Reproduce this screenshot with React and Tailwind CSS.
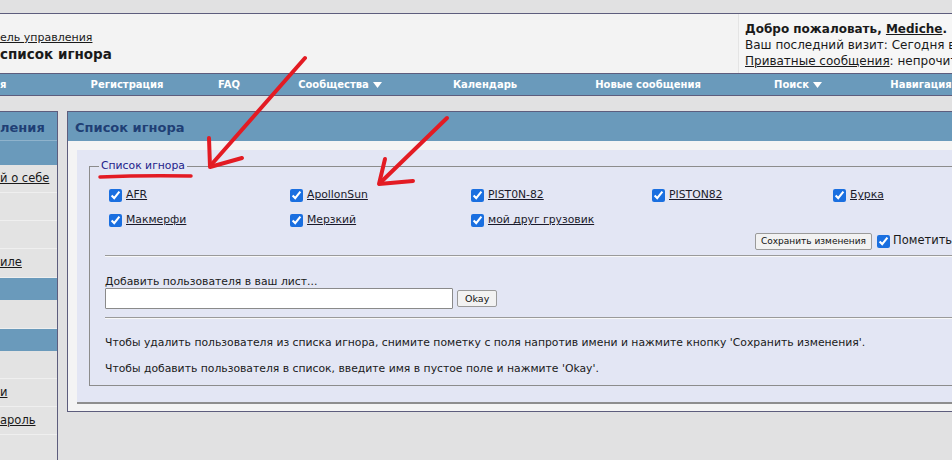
import React from 'react';

const ignored = [
  'AFR', 'ApollonSun', 'PIST0N-82', 'PISTON82', 'Бурка',
  'Макмерфи', 'Мерзкий', 'мой друг грузовик',
];

const navItems = [
  { label: 'я', w: 'w-[70px]', align: 'text-left' },
  { label: 'Регистрация', w: 'w-[114px]' },
  { label: 'FAQ', w: 'w-[90px]' },
  { label: 'Сообщества', w: 'w-[132px]', menu: true },
  { label: 'Календарь', w: 'w-[158px]' },
  { label: 'Новые сообщения', w: 'w-[168px]' },
  { label: 'Поиск', w: 'w-[132px]', menu: true },
  { label: 'Навигация', w: 'w-[114px]' },
];

// sidebar rows: kind + height + visible text fragment
const sideRows = [
  { kind: 'blue', h: 'h-[24px]' },
  { kind: 'row', h: 'h-[28px]', text: 'й о себе' },
  { kind: 'row', h: 'h-[28px]' },
  { kind: 'row', h: 'h-[28px]' },
  { kind: 'row', h: 'h-[29px]', text: 'иле' },
  { kind: 'blue', h: 'h-[22px]' },
  { kind: 'row', h: 'h-[29px]' },
  { kind: 'blue', h: 'h-[22px]' },
  { kind: 'row', h: 'h-[28px]' },
  { kind: 'row', h: 'h-[28px]', text: 'и' },
  { kind: 'row', h: 'h-[28px]', text: 'ароль' },
  { kind: 'row', h: 'h-[28px]' },
];

const Caret = () => (
  <svg width="9" height="6" viewBox="0 0 9 6" className="inline-block ml-[4px] mb-[1px]">
    <path d="M0 0 L9 0 L4.5 6 Z" fill="#ffffff" />
  </svg>
);

const Annotations = () => (
  <svg className="absolute inset-0 pointer-events-none" width="952" height="460" viewBox="0 0 952 460">
    <g stroke="#e31b23" strokeWidth="4" strokeLinecap="round" fill="none">
      <path d="M305 58 L211 165" />
      <path d="M209 138 L210 167 L242 158" strokeLinejoin="round" />
      <path d="M447 118 L380 183" />
      <path d="M385 159 L379 184 L413 181" strokeLinejoin="round" />
      <path d="M100 177 Q145 175 191 176" strokeWidth="3.5" />
    </g>
  </svg>
);

export default function App() {
  return (
    <div className="relative w-[952px] h-[460px] overflow-hidden bg-[#e1e1e2] text-[#1a1a1a] font-['DejaVu_Sans',sans-serif]">
      <div className="h-[13px]" />

      {/* Header */}
      <div className="flex h-[60px] border-t border-[#5d5d7d]">
        <div className="flex-1 bg-[#f3f3f3] pt-[15px] leading-[17px]">
          <div className="text-[11px]"><a className="underline">ель управления</a></div>
          <div className="font-bold text-[13.5px]">список игнора</div>
        </div>
        <div className="w-[214px] bg-[#f6f6f6] border-l border-[#e4e4e4] pl-[6px] pt-[7px] text-[12px] leading-[16px] whitespace-nowrap">
          <div className="font-bold">Добро пожаловать, <a className="underline">Mediche</a>.</div>
          <div>Ваш последний визит: Сегодня в 10:12</div>
          <div><a className="underline">Приватные сообщения</a>: непрочитанных 0</div>
        </div>
      </div>

      {/* Nav bar */}
      <div className="flex h-[23px] items-center bg-[#6a9abb] border-y border-[#5d5d7d] text-white font-bold text-[10px] whitespace-nowrap">
        {navItems.map((n) => (
          <div key={n.label} className={`${n.w} shrink-0 ${n.align || 'text-center'}`}>
            {n.label}
            {n.menu && <Caret />}
          </div>
        ))}
      </div>

      <div className="h-[15px]" />

      {/* Body */}
      <div className="flex items-start">
        {/* Sidebar */}
        <div className="w-[58px] shrink-0 h-[349px] border-t border-r border-[#5d5d7d] bg-[#e3e3e3]">
          <div className="h-[29px] bg-[#6a9abb] flex items-center pt-[3px] text-[13px] font-bold text-[#1f3f75] border-b border-[#8fb3cc]">
            ления
          </div>
          {sideRows.map((r, i) =>
            r.kind === 'blue' ? (
              <div key={i} className={`${r.h} bg-[#6a9abb]`} />
            ) : (
              <div key={i} className={`${r.h} flex items-center border-b border-[#efefef] text-[11.5px] whitespace-nowrap`}>
                {r.text && <a className="underline">{r.text}</a>}
              </div>
            )
          )}
        </div>

        <div className="w-[9px] shrink-0" />

        {/* Main panel */}
        <div className="w-[900px] shrink-0 border border-[#5d5d7d] bg-[#f4f4f4]">
          <div className="h-[29px] bg-[#6a9abb] flex items-center pt-[2px] pl-[7px] text-[13px] font-bold text-[#1f3f75]">
            Список игнора
          </div>
          <div className="pl-[9px] pt-[9px] pb-[7px]">
            <div className="bg-[#e3e6f4] border-b-2 border-[#8e8e8e] pl-[12px] pt-[9px] pb-[16px]">
              <fieldset className="border border-[#8c8c8c] px-[15px] pb-[9px] text-[10.8px]">
                <legend className="ml-[-6px] px-[2px] leading-[14px] text-[#22228a]">Список игнора</legend>

                <div className="grid grid-cols-[181px_181px_181px_181px_181px] auto-rows-[25px] mt-[10px]">
                  {ignored.map((name) => (
                    <label key={name} className="flex items-center whitespace-nowrap">
                      <input type="checkbox" defaultChecked className="m-0 ml-[4px] w-[13px] h-[13px] accent-[#1a6fe0]" />
                      <a className="ml-[4px] underline text-[#1a1a2a]">{name}</a>
                    </label>
                  ))}
                </div>

                <div className="flex items-center h-[18px] mt-[-1px] ml-[650px] whitespace-nowrap">
                  <button className="h-[17px] px-[5px] bg-[#f2f2f2] border border-[#9a9a9a] rounded-[2px] text-[9px] leading-[15px] text-[#111]">
                    Сохранить изменения
                  </button>
                  <input type="checkbox" defaultChecked className="m-0 ml-[5px] w-[13px] h-[13px] accent-[#1a6fe0]" />
                  <span className="ml-[3px] text-[11.5px]">Пометить все</span>
                </div>

                <div className="mt-[5px] border-t border-[#9a9a9a] border-b border-b-[#f8f8f8]" />

                <div className="mt-[18px] leading-[13px]">Добавить пользователя в ваш лист...</div>
                <div className="flex items-center">
                  <input type="text" className="w-[348px] h-[21px] bg-white border border-[#8a8a8a] rounded-[1px]" />
                  <button className="ml-[4px] h-[17px] px-[7px] bg-[#f2f2f2] border border-[#9a9a9a] rounded-[2px] text-[9.5px] leading-[15px] text-[#111]">
                    Okay
                  </button>
                </div>

                <div className="mt-[8px] border-t border-[#9a9a9a] border-b border-b-[#f8f8f8]" />

                <p className="mt-[17px] leading-[14px] whitespace-nowrap">
                  Чтобы удалить пользователя из списка игнора, снимите пометку с поля напротив имени и нажмите кнопку 'Сохранить изменения'.
                </p>
                <p className="mt-[12px] leading-[14px] whitespace-nowrap">
                  Чтобы добавить пользователя в список, введите имя в пустое поле и нажмите 'Okay'.
                </p>
              </fieldset>
            </div>
          </div>
        </div>
      </div>

      <Annotations />
    </div>
  );
}
